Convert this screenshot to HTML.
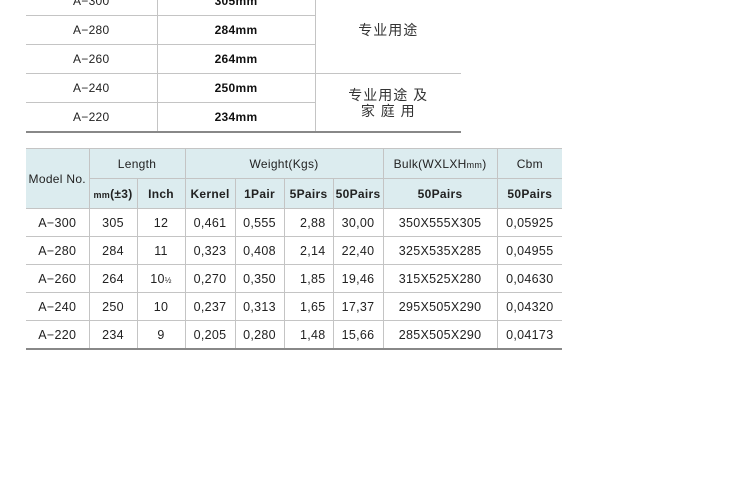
<!DOCTYPE html>
<html><head><meta charset="utf-8"><style>
body{margin:0;width:750px;height:500px;background:#fff;font-family:"Liberation Sans","Noto Sans CJK SC",sans-serif;color:#222;position:relative;overflow:hidden}
table{border-collapse:collapse;position:absolute;table-layout:fixed}
td{text-align:center;padding:0;font-size:12px;border:1px solid #c4c4c4;letter-spacing:0.3px}
#t1{left:26px;top:-14px;width:435px}
#t1 td{height:28px}
#t1 tr:last-child td{border-bottom:2px solid #888}
#t1 td.last{border-bottom:2px solid #888}
#t1 td:first-child{border-left:none}
#t1 td.b{font-weight:bold;color:#111}
#t1 td.c{font-size:14px;color:#333;letter-spacing:1px}
#t2{left:26px;top:148px;width:536px}
#t2 td:first-child{border-left:none}
#t2 td:last-child{border-right:none}
#t2 tr.h td{background:#dcecef;height:29px;font-size:12px}
#t2 tr.d td{height:27px;font-size:12.5px}
#t2 tr.d:last-child td{border-bottom:2px solid #888}
#t2 .hb td{font-weight:bold;font-size:12.5px}
#t2 tr.h:first-child td{border-top:1px solid #c4c4c4}
</style></head><body>
<table id="t1">
<colgroup><col style="width:131px"><col style="width:158px"><col style="width:146px"></colgroup>
<tr><td>A−300</td><td class="b">305mm</td><td rowspan="3" class="c" style="border-right:none">专业用途</td></tr>
<tr><td>A−280</td><td class="b">284mm</td></tr>
<tr><td>A−260</td><td class="b">264mm</td></tr>
<tr><td>A−240</td><td class="b">250mm</td><td rowspan="2" class="c last" style="border-right:none;line-height:16px">专业用途 及<br>家 庭 用</td></tr>
<tr><td>A−220</td><td class="b">234mm</td></tr>
</table>
<table id="t2">
<colgroup><col style="width:63px"><col style="width:48px"><col style="width:48px"><col style="width:50px"><col style="width:49px"><col style="width:49px"><col style="width:50px"><col style="width:114px"><col style="width:65px"></colgroup>
<tr class="h"><td rowspan="2">Model No.</td><td colspan="2">Length</td><td colspan="4">Weight(Kgs)</td><td>Bulk(WXLXH<span style="font-size:9px">mm</span>)</td><td>Cbm</td></tr>
<tr class="h hb"><td><span style="font-size:9px">mm</span>(±3)</td><td>Inch</td><td>Kernel</td><td>1Pair</td><td>5Pairs</td><td>50Pairs</td><td>50Pairs</td><td>50Pairs</td></tr>
<tr class="d"><td>A−300</td><td>305</td><td>12</td><td>0,461</td><td>0,555</td><td style="text-align:right;padding-right:7px">2,88</td><td>30,00</td><td>350X555X305</td><td>0,05925</td></tr>
<tr class="d"><td>A−280</td><td>284</td><td>11</td><td>0,323</td><td>0,408</td><td style="text-align:right;padding-right:7px">2,14</td><td>22,40</td><td>325X535X285</td><td>0,04955</td></tr>
<tr class="d"><td>A−260</td><td>264</td><td>10<span style="font-size:8px">½</span></td><td>0,270</td><td>0,350</td><td style="text-align:right;padding-right:7px">1,85</td><td>19,46</td><td>315X525X280</td><td>0,04630</td></tr>
<tr class="d"><td>A−240</td><td>250</td><td>10</td><td>0,237</td><td>0,313</td><td style="text-align:right;padding-right:7px">1,65</td><td>17,37</td><td>295X505X290</td><td>0,04320</td></tr>
<tr class="d"><td>A−220</td><td>234</td><td>9</td><td>0,205</td><td>0,280</td><td style="text-align:right;padding-right:7px">1,48</td><td>15,66</td><td>285X505X290</td><td>0,04173</td></tr>
</table>
</body></html>
